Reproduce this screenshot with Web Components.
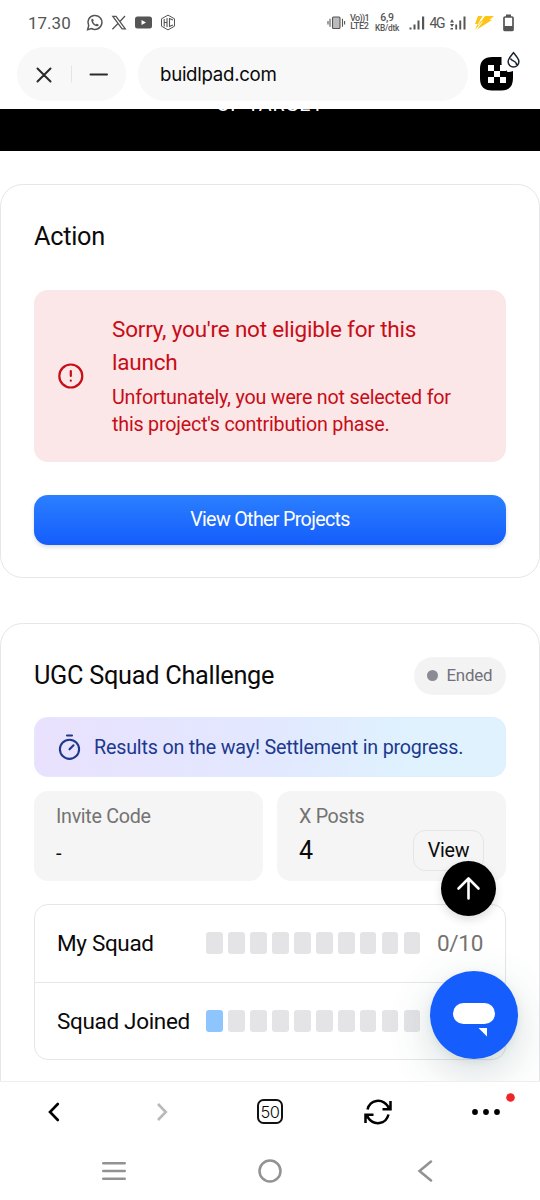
<!DOCTYPE html>
<html lang="en">
<head>
<meta charset="utf-8">
<title>Buidlpad</title>
<style>
html,body{margin:0;height:1200px;overflow:hidden;background:#fff}
body{font-family:Roboto,"Liberation Sans",sans-serif;color:#0a0a0a}
</style>
</head>
<body>
<phone-screen></phone-screen>
<script>
function define(name, html){
  const t=document.createElement('template');
  t.innerHTML=html;
  customElements.define(name,class extends HTMLElement{
    constructor(){super();this.attachShadow({mode:'open'}).append(t.content.cloneNode(true));}
  });
}

define('status-bar',`<style>
:host{display:flex;height:45px;box-sizing:border-box;align-items:center;justify-content:space-between;padding:0 26.500px 0 28px;color:#555}
.l,.r{display:flex;align-items:center}
.time{font-size:17px;letter-spacing:0;width:58px}
svg{display:block;flex:none}
.two{font-size:9px;line-height:9px;text-align:center;font-weight:500;white-space:nowrap;flex:none}
</style>
<div class="l"><span class="time">17.30</span>
<svg width="90" height="18" viewBox="86 13.500 90 18" fill="none" stroke="#555">
<path d="M87.600 29.200l1.100-4.100a7 7 0 1 1 2.800 2.900z" stroke-width="1.500"/>
<path d="M91.600 18.600c.6-.7 1.300-.5 1.600.2l.5 1.200c.1.4-.6.9-.6 1.200.5 1.200 1.500 2.200 2.700 2.700.4 0 .8-.8 1.200-.7l1.400.7c.5.3.3 1-.2 1.500-2.700 2-8.200-3.500-6.600-6.800z" fill="#555" stroke="none"/>
<path d="M112.800 15.800h3.200l9.300 12.600h-3.200zM125 15.500l-5.500 6M117.800 23.200l-5.400 5.600" stroke-width="1.300"/>
<rect x="135" y="16" width="17" height="12" rx="2.500" fill="#555" stroke="none"/><path d="M141.500 19.500v5l4.500-2.500z" fill="#fff" stroke="none"/>
<path d="M168 14.600l6.500 3.700v7.400l-6.500 3.700-6.500-3.700v-7.400z" stroke-width="1"/><path d="M164.200 18.500v7.500M167 17.500v9M164.200 22h2.800M173 19.500l-3.500-1.500v8l3.500-1.500" stroke-width="1.100"/>
</svg></div>
<div class="r">
<svg width="19" height="18" viewBox="327 13 19 18" fill="none" stroke="#555" stroke-width="1.100"><rect x="332.500" y="16" width="7.500" height="11.500" rx="1" fill="#bbb"/><path d="M330 17.800v8M328 20v3.500M342.500 17.800v8M344.600 20v3.500"/></svg>
<div class="two" style="width:20px;margin-left:4px;line-height:8px;font-size:9px;letter-spacing:-.25px;margin-top:-1px"><span style="letter-spacing:-.6px">Vo))1</span><br>LTE2</div>
<div class="two" style="width:25px;margin-left:5px;font-size:8.300px;line-height:10px;letter-spacing:-.25px"><span style="font-size:10.500px">6,9</span><br>KB/dtk</div>
<svg width="17" height="16" viewBox="408 14 17 16" fill="#555" style="margin-left:9px"><path d="M408.500 26.500h2v2h-2zM412.500 23.500h2v5h-2zM416.500 19.500h2v9h-2zM421 15.500h2.200v13h-2.200z"/></svg>
<span style="font-size:14px;width:17px;margin-left:4px;letter-spacing:-1.400px;white-space:nowrap">4G</span>
<svg width="18" height="16" viewBox="448 14 18 16" fill="#555" style="margin-left:2px"><path d="M449 21.500l2-3.200 2 3.200zM449 23h4l-2 3zM449.500 27h2.500v1.600h-2.500zM454.300 23.500h1.800v5h-1.800zM458.300 19.500h1.900v9h-1.900zM462.500 15.500h2v13h-2z"/></svg>
<svg width="20" height="16" viewBox="473 14 20 16" fill="#ffc414" style="margin-left:7px"><path d="M477 15h5l-3.500 5h3L474 29l2.500-6h-2.500zM484 15h9l-4.500 4h2.500l-15 9.500 6-8h-2z"/><path d="M482.500 14.500L477 24" stroke="#fff"/></svg>
<svg width="11" height="18" viewBox="502 13 11 18" style="margin-left:9px"><path d="M505 13.500h5v2.500h-5z" fill="#555"/><rect x="503" y="16" width="9" height="13.500" rx="1" fill="none" stroke="#555" stroke-width="1.700"/><path d="M503 25h9v4.500h-9z" fill="#555"/></svg>
</div>`);

define('address-bar',`<style>
:host{display:flex;height:64px;box-sizing:border-box;padding:2px 0 0 17px}
.pill{height:54px;background:#f8f8f8;border-radius:27px;display:flex;align-items:center;box-sizing:border-box;flex:none}
.a{width:109px;margin-right:12px}
.u{width:330px;padding-left:22px;font:400 18.700px Inter,sans-serif;letter-spacing:-.3px;color:#0a0a0a}
svg{display:block;flex:none}
</style>
<div class="pill a"><svg width="109" height="54" viewBox="17 47 109 54" fill="none" stroke="#2b2b2b" stroke-width="2" stroke-linecap="round"><path d="M37.500 68.500l13 13M50.500 68.500l-13 13M90.500 74.500H107"/><path d="M71.500 66v16" stroke="#e4e4e4" stroke-width="1"/></svg></div>
<div class="pill u">buidlpad.com</div>
<svg width="60" height="54" viewBox="468 47 60 54"><path d="M493 57h8.500v5.500c0 3 .5 3.500.5 5l4 2.500 1.500 2c2 0 3 0 5.500-1v7c0 8.500-4 12.500-11.500 12.500h-9.500c-8 0-12-4-12-12v-9.500c0-8 4-12 12.500-12z" fill="#000"/><path d="M488 65h6v6h-6zM500 65h6v6h-6zM494 71h6v6h-6zM488 77h6v6h-6zM500 77h6v6h-6z" fill="#fff"/><path d="M513.500 52.800c2.500 3.200 5.400 5.800 5.400 8.800a5.400 5.400 0 0 1-10.800 0c0-3 2.900-5.600 5.400-8.800zM510.500 58.500c1 3 6.500 2 6 6.500" fill="#fff" stroke="#1b2430" stroke-width="1.500"/></svg>`);

define('top-banner',`<style>
:host{display:flex;height:42px;background:#000;color:#fff;justify-content:center;overflow:hidden;font-size:19.700px;line-height:24px;letter-spacing:.7px}
span{margin-top:-16.500px}
</style><span><slot></slot></span>`);

define('page-card',`<style>
:host{display:block;box-sizing:border-box;border:1.400px solid #e6e6e8;border-radius:22.500px;padding:0 33px;background:#fff}
</style><slot></slot>`);

define('alert-box',`<style>
:host{display:flex;align-items:center;box-sizing:border-box;height:172px;border-radius:14px;background:#fbe6e8;color:#c70d16;padding:0 24px}
svg{display:block;flex:none;margin-right:28px}
.t{font-size:22.500px;line-height:33px;letter-spacing:-.2px;margin-top:-1px}
.d{font-size:19.700px;line-height:27.500px;margin-top:5px;letter-spacing:-.2px}
</style>
<svg width="26" height="26" viewBox="0 0 26 26" fill="none" stroke="#c70d16" stroke-width="2.200" stroke-linecap="round"><circle cx="12.800" cy="13" r="11.500"/><path d="M12.800 8v5M12.800 17.600v.1"/></svg>
<div><div class="t"><slot name="title"></slot></div><div class="d"><slot></slot></div></div>`);

define('primary-button',`<style>
:host{display:flex;align-items:center;justify-content:center;height:49.500px;border-radius:14px;background:linear-gradient(#2b7fff,#155dfc);color:#fff;font-size:19.700px;letter-spacing:-.67px;box-shadow:0 2px 4px rgba(0,0,0,.14)}
</style><slot></slot>`);

define('status-badge',`<style>
:host{display:flex;align-items:center;box-sizing:border-box;width:92px;height:38px;border-radius:19px;background:#f3f3f3;color:#71717a;font-size:16.900px;letter-spacing:-.25px;padding:0 0 1px 13px}
i{width:11px;height:11px;border-radius:50%;background:#8b8b96;margin-right:8.500px;margin-top:1px}
</style><i></i><slot></slot>`);

define('info-banner',`<style>
:host{display:flex;align-items:center;height:60px;box-sizing:border-box;border:1.400px solid rgba(225,235,255,.7);border-radius:14px;background:linear-gradient(90deg,#e9e1fd,#e2e8ff 50%,#dff2fe 80%);background-origin:border-box;color:#1c398e;font-size:19.700px;letter-spacing:-.18px;padding-left:22px;white-space:nowrap}
svg{flex:none;margin-right:12px}
</style><svg width="25" height="28" viewBox="57 733 25 28" fill="none" stroke="#1c398e" stroke-width="2.100" stroke-linecap="round"><path d="M67 735.500h5M69.500 749.300l4-4"/><circle cx="69.500" cy="749.300" r="9.600"/></svg><slot></slot>`);

define('info-tile',`<style>
:host{display:block;flex:1;height:89.500px;box-sizing:border-box;border-radius:14px;background:#f5f5f5;padding:13px 22px 0}
.k{font-size:19.700px;line-height:25px;letter-spacing:-.3px;color:#737373}
.row{display:flex;justify-content:space-between;height:41px;align-items:center;margin-top:.5px;font-size:25px}
::slotted(.code){font-size:20px;padding-top:6px}
</style><div class="k"><slot name="label"></slot></div><div class="row"><slot></slot></div>`);

define('outline-button',`<style>
:host{display:flex;align-items:center;justify-content:center;box-sizing:border-box;width:71px;height:41px;border:1.400px solid #e5e5e5;border-radius:12px;font-size:19.700px;letter-spacing:-.3px}
</style><slot></slot>`);

customElements.define('squad-row',class extends HTMLElement{
  constructor(){
    super();
    const n=+this.getAttribute('filled');
    this.attachShadow({mode:'open'}).innerHTML=`<style>
:host{display:flex;align-items:center;height:77px;box-sizing:border-box;padding-left:22px;font-size:22.500px}
.n{width:149px;white-space:nowrap;letter-spacing:-.33px;margin-top:-1px}
.c{display:flex;gap:5.400px}
i{width:16.600px;height:22px;border-radius:3px;background:#e4e4e7}
i.on{background:#8ec5ff}
.v{margin:-1px 0 0 16.500px;color:#737373;letter-spacing:-.3px}
</style><span class="n"><slot></slot></span><div class="c">${Array.from({length:10},(_,k)=>`<i class="${k<n?'on':''}"></i>`).join('')}</div><span class="v"><slot name="count"></slot></span>`;
  }
});

define('squad-table',`<style>
:host{display:block;box-sizing:border-box;border:1.400px solid #e6e6e8;border-radius:14px;height:156.500px}
::slotted(:last-of-type){border-top:1.400px solid #e6e6e8;height:78.500px!important}
</style><slot></slot>`);

define('scroll-top',`<style>
:host{position:absolute;left:441px;top:752px;width:55px;height:55px;border-radius:50%;background:#000;box-shadow:0 4px 10px rgba(0,0,0,.13)}
svg{display:block}
</style><svg width="55" height="55" fill="none" stroke="#fff" stroke-width="2.600" stroke-linecap="round" stroke-linejoin="round"><path d="M27.500 37.500V18M17.500 27.500l10-10 10 10"/></svg>`);

define('chat-button',`<style>
:host{position:absolute;left:430px;top:862px;width:88px;height:88px;border-radius:50%;background:#155dfc;box-shadow:0 14px 45px rgba(40,80,80,.2),0 3px 8px rgba(0,60,60,.08)}
svg{display:block}
</style><svg width="88" height="88" fill="#fff"><rect x="23" y="32" width="42" height="21" rx="10.500"/><path d="M48.500 57h8.500v8.500z"/></svg>`);

define('browser-nav',`<style>
:host{display:block;border-top:1px solid #eee;height:60px;box-sizing:border-box}
.g{display:grid;grid-template-columns:repeat(5,108px);height:59px;align-items:center;justify-items:center}
svg{display:block;overflow:visible}
.tabs{width:26px;height:25px;box-sizing:border-box;border:2px solid #111;border-radius:6.500px;display:flex;align-items:center;justify-content:center;font:300 16.500px Inter,sans-serif;letter-spacing:-.6px}
</style><div class="g">
<svg width="12" height="18" fill="none" stroke="#000" stroke-width="2.600" stroke-linecap="round"><path d="M9.800 1L2 9l7.800 8"/></svg>
<svg width="12" height="18" fill="none" stroke="#b9b9b9" stroke-width="2.600"><path d="M2 1l7.800 8L2 17"/></svg>
<div class="tabs">50</div>
<svg width="28" height="26" fill="none" stroke="#000" stroke-width="2.500"><path d="M3.500 10.500C6 .5 18-1.500 24.500 8M24.500 15.500C22 25.500 10 27.500 3.500 18"/><path d="M26.500 2v8.200h-8M1.500 24v-8.200h8"/><path d="M26.500 6.500v3.700h-5zM1.500 19.500v-3.700h5z" fill="#000" stroke-width="1"/></svg>
<svg width="28" height="26" fill="#000"><circle cx="3" cy="13" r="2.900"/><circle cx="14" cy="13" r="2.900"/><circle cx="25" cy="13" r="2.900"/><circle cx="38.500" cy="-1.500" r="4.300" fill="#f02626"/></svg>
</div>`);

define('system-nav',`<style>
:host{display:flex;height:59px;align-items:center;padding-left:102px}
svg{display:block}
.home{margin:0 135px 0 132px}
</style>
<svg width="24" height="20" fill="none" stroke="#929292" stroke-width="2.600" stroke-linecap="round"><path d="M1.300 2.300h21.400M1.300 10h21.400M1.300 17.700h21.400"/></svg>
<svg class="home" width="24" height="24" fill="none" stroke="#929292" stroke-width="2.500"><circle cx="12" cy="12" r="10.500"/></svg>
<svg width="16" height="22" fill="none" stroke="#929292" stroke-width="2.500" stroke-linecap="round"><path d="M14 1.500L2.500 11 14 20.500"/></svg>`);

define('phone-screen',`<style>
:host{display:flex;flex-direction:column;width:540px;height:1200px;background:#fff}
main{position:relative;height:972px;overflow:hidden}
h2{margin:0;font-weight:400;font-size:25.300px;line-height:34px;letter-spacing:-.28px}
.c1{margin-top:32.500px;height:394.500px;padding-top:35px}
.c1 alert-box{margin-top:36.500px;margin-bottom:33px}
.c2{margin-top:44.500px;height:520px;padding-top:33px}
.head{display:flex;justify-content:space-between;align-items:center;height:38px}
info-banner{margin-top:22.500px}
.tiles{display:flex;gap:14px;margin:14px 0 23px}
</style>
<status-bar></status-bar>
<address-bar></address-bar>
<main>
<top-banner>OF TARGET</top-banner>
<page-card class="c1"><h2>Action</h2>
<alert-box><span slot="title">Sorry, you're not eligible for this launch</span>Unfortunately, you were not selected for this project's contribution phase.</alert-box>
<primary-button>View Other Projects</primary-button></page-card>
<page-card class="c2"><div class="head"><h2>UGC Squad Challenge</h2><status-badge>Ended</status-badge></div>
<info-banner>Results on the way! Settlement in progress.</info-banner>
<div class="tiles"><info-tile><span slot="label">Invite Code</span><span class="code">-</span></info-tile><info-tile><span slot="label">X Posts</span><span>4</span><outline-button>View</outline-button></info-tile></div>
<squad-table id="squads"></squad-table></page-card>
<scroll-top></scroll-top><chat-button></chat-button>
</main>
<browser-nav></browser-nav>
<system-nav></system-nav>`);

const table=document.querySelector('phone-screen').shadowRoot.getElementById('squads');
table.innerHTML='<squad-row filled="0">My Squad<span slot="count">0/10</span></squad-row><squad-row filled="1">Squad Joined</squad-row>';
</script>
</body>
</html>
